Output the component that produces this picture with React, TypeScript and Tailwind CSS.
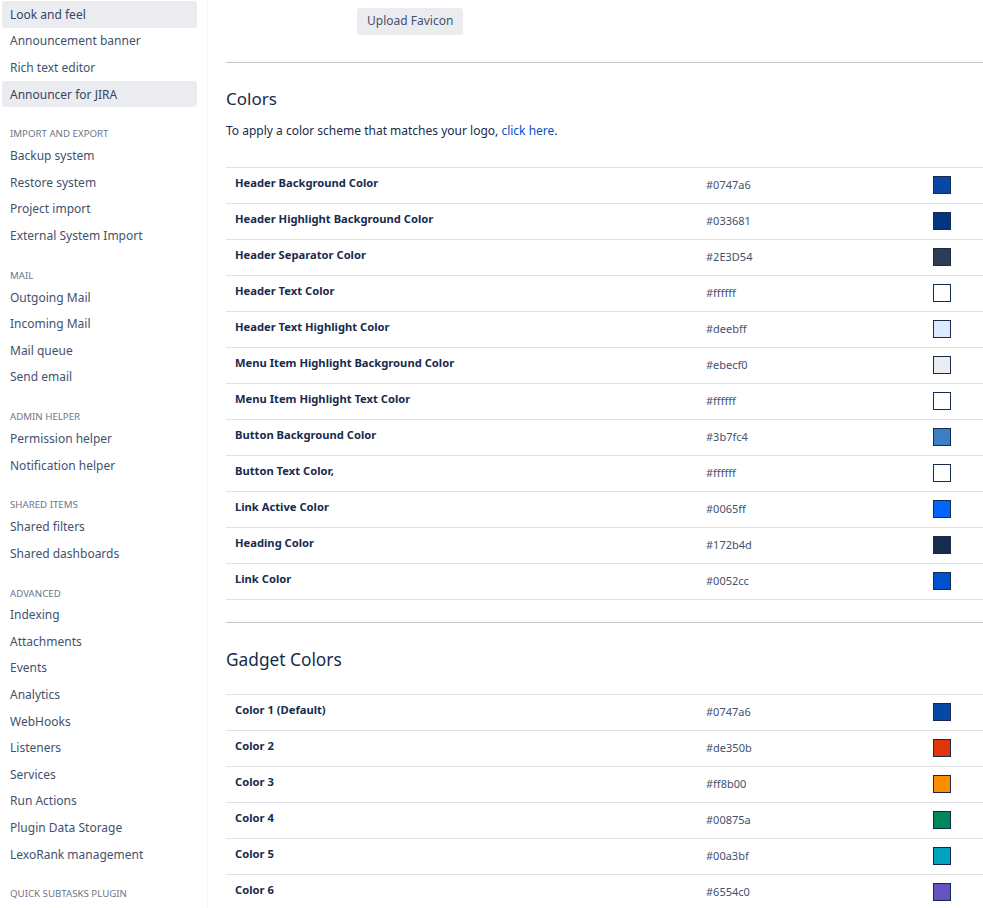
const groups: { title?: string; items: { label: string; active?: boolean }[] }[] = [
  {
    items: [
      { label: "Look and feel", active: true },
      { label: "Announcement banner" },
      { label: "Rich text editor" },
      { label: "Announcer for JIRA", active: true },
    ],
  },
  {
    title: "Import and export",
    items: [
      { label: "Backup system" },
      { label: "Restore system" },
      { label: "Project import" },
      { label: "External System Import" },
    ],
  },
  {
    title: "Mail",
    items: [
      { label: "Outgoing Mail" },
      { label: "Incoming Mail" },
      { label: "Mail queue" },
      { label: "Send email" },
    ],
  },
  {
    title: "Admin helper",
    items: [{ label: "Permission helper" }, { label: "Notification helper" }],
  },
  {
    title: "Shared items",
    items: [{ label: "Shared filters" }, { label: "Shared dashboards" }],
  },
  {
    title: "Advanced",
    items: [
      { label: "Indexing" },
      { label: "Attachments" },
      { label: "Events" },
      { label: "Analytics" },
      { label: "WebHooks" },
      { label: "Listeners" },
      { label: "Services" },
      { label: "Run Actions" },
      { label: "Plugin Data Storage" },
      { label: "LexoRank management" },
    ],
  },
  { title: "Quick subtasks plugin", items: [] },
];

const colors = [
  ["Header Background Color", "#0747a6"],
  ["Header Highlight Background Color", "#033681"],
  ["Header Separator Color", "#2E3D54"],
  ["Header Text Color", "#ffffff"],
  ["Header Text Highlight Color", "#deebff"],
  ["Menu Item Highlight Background Color", "#ebecf0"],
  ["Menu Item Highlight Text Color", "#ffffff"],
  ["Button Background Color", "#3b7fc4"],
  ["Button Text Color,", "#ffffff"],
  ["Link Active Color", "#0065ff"],
  ["Heading Color", "#172b4d"],
  ["Link Color", "#0052cc"],
];

const gadgets = [
  ["Color 1 (Default)", "#0747a6"],
  ["Color 2", "#de350b"],
  ["Color 3", "#ff8b00"],
  ["Color 4", "#00875a"],
  ["Color 5", "#00a3bf"],
  ["Color 6", "#6554c0"],
];

function ColorTable({ rows }: { rows: string[][] }) {
  return (
    <div className="border-t border-[#dfe1e6]">
      {rows.map(([label, hex]) => (
        <div key={label} className="flex h-9 border-b border-[#dfe1e6] items-center">
          <div className="w-[480px] pl-[9px] pb-1 text-[11.2px] font-bold text-[#172b4d]">{label}</div>
          <div className="w-[227px] text-[11px] text-[#42526e]">{hex}</div>
          <div className="h-[18px] w-[18px] border border-[#172b4d]" style={{ backgroundColor: hex }} />
        </div>
      ))}
    </div>
  );
}

export default function App() {
  return (
    <div className="flex min-h-[908px] bg-white font-['Noto_Sans','Open_Sans',sans-serif] text-[#172b4d] overflow-hidden">
      <nav className="w-[208px] shrink-0 border-r border-[#f4f5f7] pl-[2px] pr-[10px] pt-[1px]">
        {groups.map((g, i) => (
          <div key={i}>
            {g.title && (
              <div className="mt-[19px] h-4 pl-2 text-[9.7px] uppercase leading-4 text-[#6b778c]">{g.title}</div>
            )}
            {g.items.map((it) => (
              <div
                key={it.label}
                className={`flex h-[26.6px] items-center rounded-[3px] pl-2 pt-px text-[12px] text-[#42526e] ${it.active ? "bg-[#ebecf0] text-[#344563]" : ""}`}
              >
                {it.label}
              </div>
            ))}
          </div>
        ))}
      </nav>
      <main className="flex-1 pl-[18px]">
        <div className="pl-[131px] pt-[7px]">
          <button className="h-[27px] rounded-[3px] bg-[#ebecf0] px-[10px] text-[12px] text-[#42526e]">Upload Favicon</button>
        </div>
        <hr className="mt-[27px] border-t border-[#c1c7d0]" />
        <h2 className="mt-[24px] text-[17px] leading-6 text-[#172b4d]">Colors</h2>
        <p className="mt-[11px] text-[12px] text-[#172b4d]">
          To apply a color scheme that matches your logo, <span className="text-[#0052cc]">click here</span>.
        </p>
        <div className="mt-[27px]">
          <ColorTable rows={colors} />
        </div>
        <hr className="mt-[22px] border-t border-[#c1c7d0]" />
        <h2 className="mt-[25px] text-[17.3px] leading-6 text-[#172b4d]">Gadget Colors</h2>
        <div className="mt-[22px]">
          <ColorTable rows={gadgets} />
        </div>
      </main>
    </div>
  );
}
